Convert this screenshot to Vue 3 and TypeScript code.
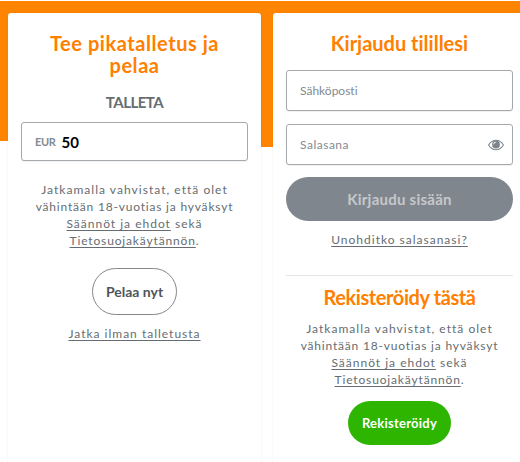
<script setup lang="ts">
import { ref } from 'vue'

const amount = ref<string>('50')
const currency = 'EUR'
</script>

<template>
  <main class="page">
    <div class="banner"><i></i><i></i></div>
    <section class="card deposit">
      <h2>Tee pikatalletus ja<br />pelaa</h2>
      <h3>TALLETA</h3>
      <label class="field amount"><span>{{ currency }}</span><b>{{ amount }}</b></label>
      <p class="terms">
        <span class="l1">Jatkamalla vahvistat, että olet</span><br />
        <span class="l2">vähintään 18-vuotias ja hyväksyt</span><br />
        <span class="l3"><a>Säännöt ja ehdot</a> sekä</span><br />
        <span class="l4"><a>Tietosuojakäytännön</a>.</span>
      </p>
      <button class="play">Pelaa nyt</button>
      <a class="link skip">Jatka ilman talletusta</a>
    </section>
    <section class="card login">
      <h2>Kirjaudu tilillesi</h2>
      <div class="field email">Sähköposti</div>
      <div class="field password">
        <span>Salasana</span>
        <svg class="eye" viewBox="0 0 16 12" width="16" height="12">
          <path d="M.6 6C2.4 3 5 1.3 8 1.3S13.600 3 15.400 6C13.600 9 11 10.700 8 10.700S2.400 9 .6 6Z" fill="#fff" stroke="#7d848b" stroke-width="1.100" />
          <circle cx="8" cy="5.500" r="3.900" fill="#7d848b" />
          <path d="M5.700 5.300A2.200 2.200 0 0 1 7.700 3.200" fill="none" stroke="#fff" stroke-width="1" />
        </svg>
      </div>
      <button class="submit">Kirjaudu sisään</button>
      <a class="link forgot">Unohditko salasanasi?</a>
      <hr />
      <h2 class="join">Rekisteröidy tästä</h2>
      <p class="terms">
        <span class="l1">Jatkamalla vahvistat, että olet</span><br />
        <span class="l2">vähintään 18-vuotias ja hyväksyt</span><br />
        <span class="l3"><a>Säännöt ja ehdot</a> sekä</span><br />
        <span class="l4"><a>Tietosuojakäytännön</a>.</span>
      </p>
      <button class="register">Rekisteröidy</button>
    </section>
  </main>
</template>

<style>
body { background: #fff; overflow: hidden; }
</style>

<style scoped>
* { box-sizing: border-box; }
.page {
  position: relative;
  display: flex;
  gap: 12px;
  width: 526px;
  height: 462px;
  padding: 13px 0 0 8px;
  overflow: hidden;
  font-family: Lato, "Liberation Sans", sans-serif;
  font-variant-ligatures: none;
  color: #666d72;
}
.banner {
  position: absolute;
  inset: 1px 0 auto;
  display: flex;
}
.banner i { width: 8px; height: 140px; background: #ff8500; }
.banner i + i { flex: 1; height: 146px; }
.card {
  position: relative;
  display: flex;
  flex-direction: column;
  align-items: center;
  width: 253px;
  height: 470px;
  flex: none;
  padding: 19px 13px 0;
  border-radius: 3px;
  background: #fff;
  box-shadow: 0 0 2px rgba(0, 0, 0, .08);
  white-space: nowrap;
}
h2, h3, p { margin: 0; text-align: center; }
h2 { font-size: 20px; line-height: 22px; font-weight: 700; color: #ff8000; }
.deposit h2 { letter-spacing: .55px; }
h3 { margin-top: 16px; font-size: 15px; line-height: 20px; font-weight: 700; letter-spacing: -.5px; }
.field {
  display: flex;
  align-items: center;
  align-self: stretch;
  height: 41px;
  padding: 0 13px;
  border: 1px solid #a4a9ad;
  border-radius: 3px;
  background: #fff;
  font-size: 12px;
  color: #838a90;
  box-shadow: 0 1px 1px rgba(0, 0, 0, .06);
}
.amount { height: 39px; margin-top: 10px; gap: 6px; }
.amount span { font-size: 11px; font-weight: 700; letter-spacing: -.4px; }
.amount b { font-size: 15px; letter-spacing: .3px; color: #000; }
.terms { margin-top: 20px; font-size: 12px; line-height: 17px; letter-spacing: .8px; }
.l1 { letter-spacing: 1.030px; }
.l3 { letter-spacing: 1px; }
.l4 { letter-spacing: .85px; }
a { text-decoration: underline; text-underline-offset: 2px; text-decoration-thickness: 1px; }
button {
  display: block;
  padding: 0;
  font-family: inherit;
  font-weight: 700;
  font-variant-ligatures: none;
  text-align: center;
}
.play {
  width: 85px;
  height: 47px;
  margin-top: 19px;
  border: 1px solid #82888c;
  border-radius: 24px;
  background: #fff;
  color: #4e555a;
  font-size: 14px;
}
.link { font-size: 12px; line-height: 18px; letter-spacing: 1px; }
.skip { margin-top: 10px; }
.email { margin-top: 16px; }
.password { margin-top: 13px; padding-right: 8px; justify-content: space-between; }
.password span { letter-spacing: .5px; }
.submit {
  align-self: stretch;
  height: 44px;
  margin-top: 12px;
  border: 0;
  border-radius: 22px;
  background: #80868e;
  color: #c5c8cb;
  font-size: 15px;
  letter-spacing: .25px;
}
.forgot { margin-top: 10px; }
hr { align-self: stretch; height: 1px; margin: 26px 0 0; border: 0; background: #e5e5e5; }
.join { margin-top: 10px; letter-spacing: -.4px; }
.login .terms { margin-top: 12px; }
.register {
  width: 103px;
  height: 44px;
  margin-top: 13px;
  border: 0;
  border-radius: 22px;
  background: #2db500;
  color: #fff;
  font-size: 13px;
  letter-spacing: .25px;
}
</style>
